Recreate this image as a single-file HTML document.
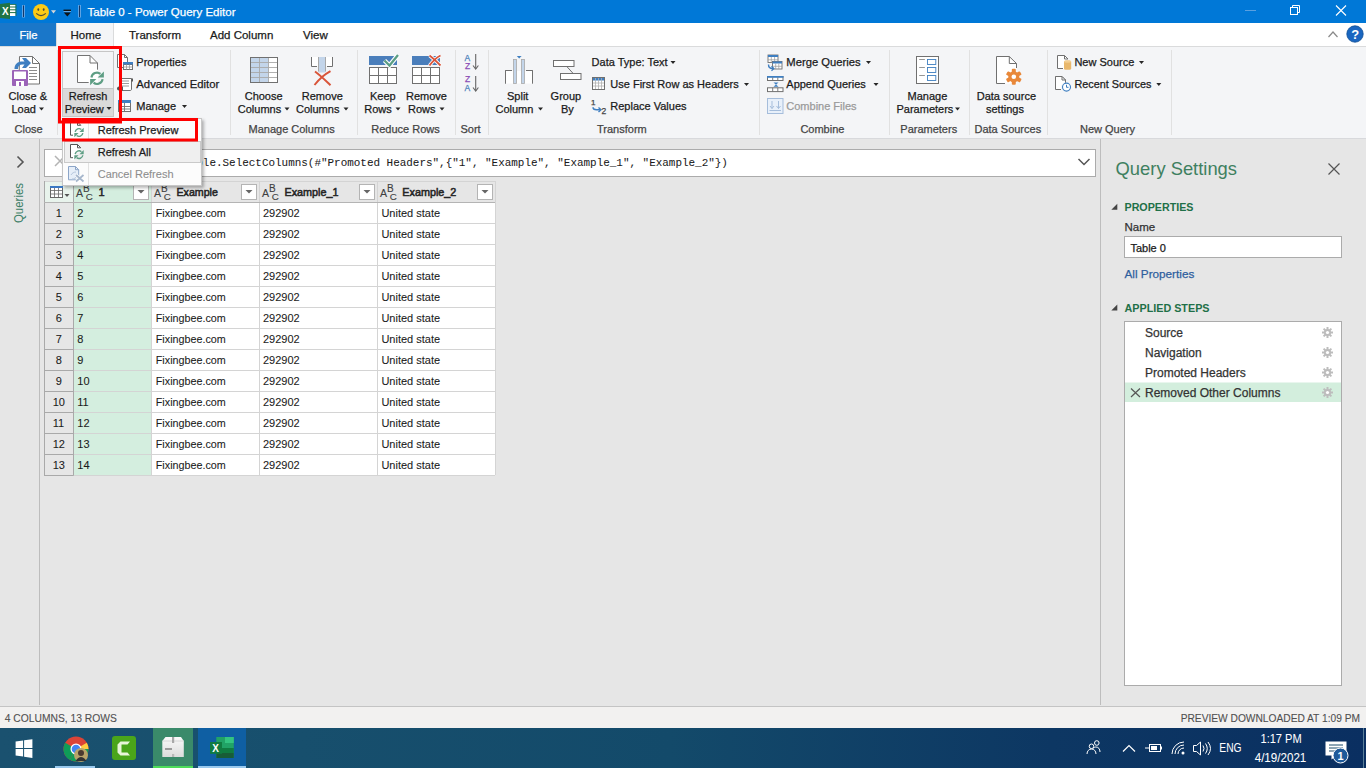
<!DOCTYPE html>
<html><head><meta charset="utf-8"><title>Power Query Editor</title>
<style>html,body{margin:0;padding:0;width:1366px;height:768px;overflow:hidden;background:#e6e6e6}
svg{display:block;font-family:"Liberation Sans",sans-serif}</style></head>
<body><svg width="1366" height="768" viewBox="0 0 1366 768">
<rect x="0" y="0" width="1366" height="23" fill="#0078d7" />
<rect x="9.5" y="4.5" width="6" height="11.5" fill="#fff" />
<line x1="9.5" y1="7" x2="16" y2="7" stroke="#1e7145" stroke-width="1" />
<line x1="9.5" y1="9.8" x2="16" y2="9.8" stroke="#1e7145" stroke-width="1" />
<line x1="9.5" y1="12.6" x2="16" y2="12.6" stroke="#1e7145" stroke-width="1" />
<line x1="9.5" y1="4.5" x2="16" y2="4.5" stroke="#1e7145" stroke-width="0.8" />
<line x1="16" y1="4.5" x2="16" y2="16" stroke="#1e7145" stroke-width="0.8" />
<path d="M0 4L10 2.8v16.2L0 18z" fill="#217346" />
<text x="2" y="14.5" font-size="10" fill="#fff" font-weight="bold" >X</text>
<rect x="22.0" y="5" width="3" height="12.5" fill="#5fa3e3" />
<rect x="23.0" y="5.5" width="1" height="11.5" fill="#12386a" />
<rect x="78.0" y="5" width="3" height="12.5" fill="#5fa3e3" />
<rect x="79.0" y="5.5" width="1" height="11.5" fill="#12386a" />
<circle cx="41" cy="12" r="8" fill="#fccb15"/>
<ellipse cx="38.3" cy="9.6" rx="0.9" ry="1.3" fill="#4e4b3a"/><ellipse cx="43.7" cy="9.6" rx="0.9" ry="1.3" fill="#4e4b3a"/>
<path d="M36.2 13.3q4.8 4.6 9.6 0" fill="none" stroke="#4e4b3a" stroke-width="1.1" />
<path d="M51 10.3h5l-2.5 3.2z" fill="#d8d8d8" />
<line x1="63.5" y1="10.3" x2="71" y2="10.3" stroke="#111" stroke-width="1.4" />
<line x1="63.5" y1="11.5" x2="71" y2="11.5" stroke="#9cc8f0" stroke-width="0.6" />
<path d="M63.8 12.5h7l-3.5 4z" fill="#111" />
<text x="87.5" y="16" font-size="11.5" fill="#fff" stroke="#fff" stroke-width="0.25" textLength="148" lengthAdjust="spacingAndGlyphs" >Table 0 - Power Query Editor</text>
<line x1="1245" y1="10.5" x2="1256" y2="10.5" stroke="#5aa0e0" stroke-width="1" />
<rect x="1290.5" y="7.5" width="7" height="7" fill="none" stroke="#fff" stroke-width="1" />
<path d="M1292.5 7.5v-2h7v7h-2" fill="none" stroke="#fff" stroke-width="1" />
<path d="M1336 5.5l10 10M1346 5.5l-10 10" fill="none" stroke="#fff" stroke-width="1.1" />
<rect x="0" y="23" width="1366" height="23" fill="#ffffff" />
<rect x="0" y="23" width="56" height="23" fill="#1a77c9" />
<text x="19.5" y="39.2" font-size="11.2" fill="#fff" stroke="#fff" stroke-width="0.25" >File</text>
<rect x="56" y="23" width="57.5" height="24" fill="#f4f5f7" />
<line x1="56.5" y1="23" x2="56.5" y2="46" stroke="#dadbdc" stroke-width="1" />
<line x1="113.5" y1="23" x2="113.5" y2="46" stroke="#dadbdc" stroke-width="1" />
<text x="70.5" y="39.2" font-size="11.5" fill="#1b1b1b" stroke="#1b1b1b" stroke-width="0.25" >Home</text>
<text x="129" y="39.2" font-size="11.5" fill="#1b1b1b" stroke="#1b1b1b" stroke-width="0.25" >Transform</text>
<text x="210" y="39.2" font-size="11.5" fill="#1b1b1b" stroke="#1b1b1b" stroke-width="0.25" >Add Column</text>
<text x="303" y="39.2" font-size="11.5" fill="#1b1b1b" stroke="#1b1b1b" stroke-width="0.25" >View</text>
<path d="M1328.5 37l4.5-5 4.5 5" fill="none" stroke="#8a8a8a" stroke-width="1.2" />
<circle cx="1355" cy="34" r="8.2" fill="#1a66c0" stroke="#0f4f96" stroke-width="0.8"/>
<text x="1351.2" y="38.8" font-size="13" fill="#fff" font-weight="bold" >?</text>
<rect x="0" y="46" width="1366" height="92" fill="#f4f5f7" />
<line x1="0" y1="46.5" x2="56" y2="46.5" stroke="#dadbdc" stroke-width="1" />
<line x1="113" y1="46.5" x2="1366" y2="46.5" stroke="#dadbdc" stroke-width="1" />
<line x1="0" y1="138.5" x2="1366" y2="138.5" stroke="#d8d9dc" stroke-width="1" />
<line x1="57.5" y1="50" x2="57.5" y2="135" stroke="#e1e1e1" stroke-width="1" />
<line x1="230.5" y1="50" x2="230.5" y2="135" stroke="#e1e1e1" stroke-width="1" />
<line x1="357.5" y1="50" x2="357.5" y2="135" stroke="#e1e1e1" stroke-width="1" />
<line x1="455.5" y1="50" x2="455.5" y2="135" stroke="#e1e1e1" stroke-width="1" />
<line x1="488.5" y1="50" x2="488.5" y2="135" stroke="#e1e1e1" stroke-width="1" />
<line x1="759.5" y1="50" x2="759.5" y2="135" stroke="#e1e1e1" stroke-width="1" />
<line x1="889.5" y1="50" x2="889.5" y2="135" stroke="#e1e1e1" stroke-width="1" />
<line x1="969.5" y1="50" x2="969.5" y2="135" stroke="#e1e1e1" stroke-width="1" />
<line x1="1047.5" y1="50" x2="1047.5" y2="135" stroke="#e1e1e1" stroke-width="1" />
<line x1="1171.5" y1="50" x2="1171.5" y2="135" stroke="#e1e1e1" stroke-width="1" />
<text x="14.5" y="133" font-size="11" fill="#444444" stroke="#444444" stroke-width="0.25" >Close</text>
<text x="248.5" y="133" font-size="11" fill="#444444" stroke="#444444" stroke-width="0.25" >Manage Columns</text>
<text x="371.3" y="133" font-size="11" fill="#444444" stroke="#444444" stroke-width="0.25" >Reduce Rows</text>
<text x="460.5" y="133" font-size="11" fill="#444444" stroke="#444444" stroke-width="0.25" >Sort</text>
<text x="597" y="133" font-size="11" fill="#444444" stroke="#444444" stroke-width="0.25" >Transform</text>
<text x="800.4" y="133" font-size="11" fill="#444444" stroke="#444444" stroke-width="0.25" >Combine</text>
<text x="900.3" y="133" font-size="11" fill="#444444" stroke="#444444" stroke-width="0.25" >Parameters</text>
<text x="974.5" y="133" font-size="11" fill="#444444" stroke="#444444" stroke-width="0.25" >Data Sources</text>
<text x="1080" y="133" font-size="11" fill="#444444" stroke="#444444" stroke-width="0.25" >New Query</text>
<path d="M19.5 56.5h13l7 7v20.5h-20.5z" fill="#fff" stroke="#737373" stroke-width="1" />
<path d="M32.5 56.5v7h7" fill="none" stroke="#737373" stroke-width="1" />
<line x1="29" y1="67.5" x2="37" y2="67.5" stroke="#8c8c8c" stroke-width="1" />
<line x1="29" y1="70.5" x2="37" y2="70.5" stroke="#8c8c8c" stroke-width="1" />
<line x1="29" y1="73.5" x2="37" y2="73.5" stroke="#8c8c8c" stroke-width="1" />
<line x1="29" y1="76.5" x2="37" y2="76.5" stroke="#8c8c8c" stroke-width="1" />
<line x1="29" y1="79.5" x2="37" y2="79.5" stroke="#8c8c8c" stroke-width="1" />
<path d="M14.5 69c0-5 3-7.5 8-7.5h2l-2.5-3.5h4l5 5-5 5h-4l2.5-3.5h-2c-3 0-4.5 1.5-4.5 4.5z" fill="#3f7fc1" />
<rect x="12" y="70" width="16" height="16" rx="1" fill="#9b63b8"/>
<rect x="14" y="71.5" width="12" height="7.5" fill="#fff" />
<rect x="16" y="81" width="8" height="5" fill="#fff" />
<rect x="19" y="82" width="2" height="4" fill="#9b63b8" />
<text x="8.5" y="100" font-size="11" fill="#1b1b1b" stroke="#1b1b1b" stroke-width="0.25" >Close &amp;</text>
<text x="11.5" y="112.5" font-size="11" fill="#1b1b1b" stroke="#1b1b1b" stroke-width="0.25" >Load</text>
<path d="M39 107.5h5l-2.5 3z" fill="#262626" />
<rect x="62.5" y="51.5" width="51" height="65" fill="#f4f5f7" stroke="#c6c6c6" stroke-width="1" />
<rect x="63" y="88" width="50" height="28" fill="#dadada" />
<line x1="63" y1="88.5" x2="113" y2="88.5" stroke="#c6c6c6" stroke-width="1" />
<path d="M77.5 55.5h12.5l8 8v19.5h-20.5z" fill="#fff" />
<path d="M88.7 82.5H77.5V55.5H90L97.5 63V69.7" fill="none" stroke="#737373" stroke-width="1" />
<path d="M90 55.5v7.5h7.5" fill="none" stroke="#737373" stroke-width="1" />
<text x="68.8" y="99.6" font-size="11" fill="#1b1b1b" stroke="#1b1b1b" stroke-width="0.25" >Refresh</text>
<text x="64.7" y="112.7" font-size="11" fill="#1b1b1b" stroke="#1b1b1b" stroke-width="0.25" >Preview</text>
<path d="M106.5 107h5l-2.5 3z" fill="#262626" />
<text x="136.3" y="66" font-size="11" fill="#1b1b1b" stroke="#1b1b1b" stroke-width="0.25" >Properties</text>
<text x="136.3" y="88" font-size="11" fill="#1b1b1b" stroke="#1b1b1b" stroke-width="0.25" textLength="83" lengthAdjust="spacingAndGlyphs" >Advanced Editor</text>
<text x="136.3" y="110" font-size="11" fill="#1b1b1b" stroke="#1b1b1b" stroke-width="0.25" >Manage</text>
<path d="M182 105h5l-2.5 3z" fill="#262626" />
<text x="244.7" y="100" font-size="11" fill="#1b1b1b" stroke="#1b1b1b" stroke-width="0.25" >Choose</text>
<text x="237.8" y="112.5" font-size="11" fill="#1b1b1b" stroke="#1b1b1b" stroke-width="0.25" >Columns</text>
<path d="M284.5 107.5h5l-2.5 3z" fill="#262626" />
<text x="301.8" y="100" font-size="11" fill="#1b1b1b" stroke="#1b1b1b" stroke-width="0.25" >Remove</text>
<text x="296" y="112.5" font-size="11" fill="#1b1b1b" stroke="#1b1b1b" stroke-width="0.25" >Columns</text>
<path d="M343.5 107.5h5l-2.5 3z" fill="#262626" />
<text x="370" y="100" font-size="11" fill="#1b1b1b" stroke="#1b1b1b" stroke-width="0.25" >Keep</text>
<text x="364.3" y="112.5" font-size="11" fill="#1b1b1b" stroke="#1b1b1b" stroke-width="0.25" >Rows</text>
<path d="M395.5 107.5h5l-2.5 3z" fill="#262626" />
<text x="406" y="100" font-size="11" fill="#1b1b1b" stroke="#1b1b1b" stroke-width="0.25" >Remove</text>
<text x="408" y="112.5" font-size="11" fill="#1b1b1b" stroke="#1b1b1b" stroke-width="0.25" >Rows</text>
<path d="M439.5 107.5h5l-2.5 3z" fill="#262626" />
<text x="507" y="100" font-size="11" fill="#1b1b1b" stroke="#1b1b1b" stroke-width="0.25" >Split</text>
<text x="495.5" y="112.5" font-size="11" fill="#1b1b1b" stroke="#1b1b1b" stroke-width="0.25" >Column</text>
<path d="M538 107.5h5l-2.5 3z" fill="#262626" />
<text x="550.6" y="100" font-size="11" fill="#1b1b1b" stroke="#1b1b1b" stroke-width="0.25" >Group</text>
<text x="560.9" y="112.5" font-size="11" fill="#1b1b1b" stroke="#1b1b1b" stroke-width="0.25" >By</text>
<text x="591.6" y="66" font-size="11" fill="#1b1b1b" stroke="#1b1b1b" stroke-width="0.25" >Data Type: Text</text>
<path d="M670.5 61h5l-2.5 3z" fill="#262626" />
<text x="610.3" y="88" font-size="11" fill="#1b1b1b" stroke="#1b1b1b" stroke-width="0.25" >Use First Row as Headers</text>
<path d="M744 83h5l-2.5 3z" fill="#262626" />
<text x="610.3" y="110" font-size="11" fill="#1b1b1b" stroke="#1b1b1b" stroke-width="0.25" >Replace Values</text>
<text x="786.3" y="66" font-size="11" fill="#1b1b1b" stroke="#1b1b1b" stroke-width="0.25" textLength="74.3" lengthAdjust="spacingAndGlyphs" >Merge Queries</text>
<path d="M866 61h5l-2.5 3z" fill="#262626" />
<text x="786.3" y="88" font-size="11" fill="#1b1b1b" stroke="#1b1b1b" stroke-width="0.25" >Append Queries</text>
<path d="M873.5 83h5l-2.5 3z" fill="#262626" />
<text x="786.3" y="110" font-size="11" fill="#9a9a9a" stroke="#9a9a9a" stroke-width="0.25" >Combine Files</text>
<text x="907.5" y="100" font-size="11" fill="#1b1b1b" stroke="#1b1b1b" stroke-width="0.25" >Manage</text>
<text x="896.5" y="112.5" font-size="11" fill="#1b1b1b" stroke="#1b1b1b" stroke-width="0.25" >Parameters</text>
<path d="M955 107.5h5l-2.5 3z" fill="#262626" />
<text x="976.7" y="100" font-size="11" fill="#1b1b1b" stroke="#1b1b1b" stroke-width="0.25" >Data source</text>
<text x="986" y="112.5" font-size="11" fill="#1b1b1b" stroke="#1b1b1b" stroke-width="0.25" >settings</text>
<text x="1074.4" y="66" font-size="11" fill="#1b1b1b" stroke="#1b1b1b" stroke-width="0.25" >New Source</text>
<path d="M1139 61h5l-2.5 3z" fill="#262626" />
<text x="1074.4" y="88" font-size="11" fill="#1b1b1b" stroke="#1b1b1b" stroke-width="0.25" textLength="77" lengthAdjust="spacingAndGlyphs" >Recent Sources</text>
<path d="M1156.3 83h5l-2.5 3z" fill="#262626" />
<rect x="0" y="139" width="1366" height="567" fill="#e6e6e6" />
<line x1="39.5" y1="139" x2="39.5" y2="705" stroke="#bdbdbd" stroke-width="1" />
<line x1="1100.5" y1="139" x2="1100.5" y2="705" stroke="#bdbdbd" stroke-width="1" />
<path d="M17.5 156.5l5.5 5.5-5.5 5.5" fill="none" stroke="#555" stroke-width="1.6" />
<text x="23.2" y="223" font-size="12.5" fill="#3d8066" textLength="40" lengthAdjust="spacingAndGlyphs" transform="rotate(-90 23.2 223)">Queries</text>
<rect x="44.5" y="149.5" width="1051" height="27" fill="#fff" stroke="#ababab" stroke-width="1" />
<text x="170" y="166" font-size="10.95" fill="#1b1b1b" stroke="#1b1b1b" stroke-width="0.05" font-family="Liberation Mono" >= Table.SelectColumns(#&quot;Promoted Headers&quot;,{&quot;1&quot;, &quot;Example&quot;, &quot;Example_1&quot;, &quot;Example_2&quot;})</text>
<path d="M1078.5 159l5.5 5.5 5.5-5.5" fill="none" stroke="#555" stroke-width="1.5" />
<path d="M55 156l10 10M65 156l-10 10" fill="none" stroke="#b4b4b4" stroke-width="1.5" />
<rect x="44" y="181" width="451" height="21" fill="#e6e6e6" />
<rect x="44" y="181" width="29" height="21" fill="#e8f3ec" />
<rect x="73" y="181" width="78" height="21" fill="#d4eedf" />
<rect x="44" y="202" width="29" height="273" fill="#e6e6e6" />
<rect x="73" y="202" width="78" height="273" fill="#d4eedf" />
<rect x="151" y="202" width="344" height="273" fill="#ffffff" />
<line x1="73" y1="202.5" x2="495" y2="202.5" stroke="#d4d4d4" stroke-width="1" />
<line x1="44" y1="202.5" x2="73.5" y2="202.5" stroke="#a9a9a9" stroke-width="1" />
<line x1="73" y1="223.5" x2="495" y2="223.5" stroke="#d4d4d4" stroke-width="1" />
<line x1="44" y1="223.5" x2="73.5" y2="223.5" stroke="#a9a9a9" stroke-width="1" />
<line x1="73" y1="244.5" x2="495" y2="244.5" stroke="#d4d4d4" stroke-width="1" />
<line x1="44" y1="244.5" x2="73.5" y2="244.5" stroke="#a9a9a9" stroke-width="1" />
<line x1="73" y1="265.5" x2="495" y2="265.5" stroke="#d4d4d4" stroke-width="1" />
<line x1="44" y1="265.5" x2="73.5" y2="265.5" stroke="#a9a9a9" stroke-width="1" />
<line x1="73" y1="286.5" x2="495" y2="286.5" stroke="#d4d4d4" stroke-width="1" />
<line x1="44" y1="286.5" x2="73.5" y2="286.5" stroke="#a9a9a9" stroke-width="1" />
<line x1="73" y1="307.5" x2="495" y2="307.5" stroke="#d4d4d4" stroke-width="1" />
<line x1="44" y1="307.5" x2="73.5" y2="307.5" stroke="#a9a9a9" stroke-width="1" />
<line x1="73" y1="328.5" x2="495" y2="328.5" stroke="#d4d4d4" stroke-width="1" />
<line x1="44" y1="328.5" x2="73.5" y2="328.5" stroke="#a9a9a9" stroke-width="1" />
<line x1="73" y1="349.5" x2="495" y2="349.5" stroke="#d4d4d4" stroke-width="1" />
<line x1="44" y1="349.5" x2="73.5" y2="349.5" stroke="#a9a9a9" stroke-width="1" />
<line x1="73" y1="370.5" x2="495" y2="370.5" stroke="#d4d4d4" stroke-width="1" />
<line x1="44" y1="370.5" x2="73.5" y2="370.5" stroke="#a9a9a9" stroke-width="1" />
<line x1="73" y1="391.5" x2="495" y2="391.5" stroke="#d4d4d4" stroke-width="1" />
<line x1="44" y1="391.5" x2="73.5" y2="391.5" stroke="#a9a9a9" stroke-width="1" />
<line x1="73" y1="412.5" x2="495" y2="412.5" stroke="#d4d4d4" stroke-width="1" />
<line x1="44" y1="412.5" x2="73.5" y2="412.5" stroke="#a9a9a9" stroke-width="1" />
<line x1="73" y1="433.5" x2="495" y2="433.5" stroke="#d4d4d4" stroke-width="1" />
<line x1="44" y1="433.5" x2="73.5" y2="433.5" stroke="#a9a9a9" stroke-width="1" />
<line x1="73" y1="454.5" x2="495" y2="454.5" stroke="#d4d4d4" stroke-width="1" />
<line x1="44" y1="454.5" x2="73.5" y2="454.5" stroke="#a9a9a9" stroke-width="1" />
<line x1="73" y1="475.5" x2="495" y2="475.5" stroke="#d4d4d4" stroke-width="1" />
<line x1="44" y1="475.5" x2="73.5" y2="475.5" stroke="#a9a9a9" stroke-width="1" />
<line x1="44" y1="181.5" x2="495" y2="181.5" stroke="#d4d4d4" stroke-width="1" />
<line x1="151.5" y1="181" x2="151.5" y2="475" stroke="#d4d4d4" stroke-width="1" />
<line x1="259.5" y1="181" x2="259.5" y2="475" stroke="#d4d4d4" stroke-width="1" />
<line x1="377.5" y1="181" x2="377.5" y2="475" stroke="#d4d4d4" stroke-width="1" />
<line x1="495.5" y1="181" x2="495.5" y2="475" stroke="#d4d4d4" stroke-width="1" />
<line x1="44.5" y1="181" x2="44.5" y2="475.5" stroke="#a9a9a9" stroke-width="1" />
<line x1="73.5" y1="181" x2="73.5" y2="475.5" stroke="#a9a9a9" stroke-width="1" />
<line x1="44" y1="202.5" x2="495" y2="202.5" stroke="#b4b4b4" stroke-width="1" />
<text x="55.75" y="216.9" font-size="11" fill="#1b1b1b" stroke="#1b1b1b" stroke-width="0.08" >1</text>
<text x="77.3" y="216.9" font-size="11" fill="#1b1b1b" stroke="#1b1b1b" stroke-width="0.08" >2</text>
<text x="155.8" y="216.9" font-size="11" fill="#1b1b1b" stroke="#1b1b1b" stroke-width="0.08" textLength="70" lengthAdjust="spacingAndGlyphs" >Fixingbee.com</text>
<text x="263" y="216.9" font-size="11" fill="#1b1b1b" stroke="#1b1b1b" stroke-width="0.08" >292902</text>
<text x="381.4" y="216.9" font-size="11" fill="#1b1b1b" stroke="#1b1b1b" stroke-width="0.08" >United state</text>
<text x="55.75" y="237.9" font-size="11" fill="#1b1b1b" stroke="#1b1b1b" stroke-width="0.08" >2</text>
<text x="77.3" y="237.9" font-size="11" fill="#1b1b1b" stroke="#1b1b1b" stroke-width="0.08" >3</text>
<text x="155.8" y="237.9" font-size="11" fill="#1b1b1b" stroke="#1b1b1b" stroke-width="0.08" textLength="70" lengthAdjust="spacingAndGlyphs" >Fixingbee.com</text>
<text x="263" y="237.9" font-size="11" fill="#1b1b1b" stroke="#1b1b1b" stroke-width="0.08" >292902</text>
<text x="381.4" y="237.9" font-size="11" fill="#1b1b1b" stroke="#1b1b1b" stroke-width="0.08" >United state</text>
<text x="55.75" y="258.9" font-size="11" fill="#1b1b1b" stroke="#1b1b1b" stroke-width="0.08" >3</text>
<text x="77.3" y="258.9" font-size="11" fill="#1b1b1b" stroke="#1b1b1b" stroke-width="0.08" >4</text>
<text x="155.8" y="258.9" font-size="11" fill="#1b1b1b" stroke="#1b1b1b" stroke-width="0.08" textLength="70" lengthAdjust="spacingAndGlyphs" >Fixingbee.com</text>
<text x="263" y="258.9" font-size="11" fill="#1b1b1b" stroke="#1b1b1b" stroke-width="0.08" >292902</text>
<text x="381.4" y="258.9" font-size="11" fill="#1b1b1b" stroke="#1b1b1b" stroke-width="0.08" >United state</text>
<text x="55.75" y="279.9" font-size="11" fill="#1b1b1b" stroke="#1b1b1b" stroke-width="0.08" >4</text>
<text x="77.3" y="279.9" font-size="11" fill="#1b1b1b" stroke="#1b1b1b" stroke-width="0.08" >5</text>
<text x="155.8" y="279.9" font-size="11" fill="#1b1b1b" stroke="#1b1b1b" stroke-width="0.08" textLength="70" lengthAdjust="spacingAndGlyphs" >Fixingbee.com</text>
<text x="263" y="279.9" font-size="11" fill="#1b1b1b" stroke="#1b1b1b" stroke-width="0.08" >292902</text>
<text x="381.4" y="279.9" font-size="11" fill="#1b1b1b" stroke="#1b1b1b" stroke-width="0.08" >United state</text>
<text x="55.75" y="300.9" font-size="11" fill="#1b1b1b" stroke="#1b1b1b" stroke-width="0.08" >5</text>
<text x="77.3" y="300.9" font-size="11" fill="#1b1b1b" stroke="#1b1b1b" stroke-width="0.08" >6</text>
<text x="155.8" y="300.9" font-size="11" fill="#1b1b1b" stroke="#1b1b1b" stroke-width="0.08" textLength="70" lengthAdjust="spacingAndGlyphs" >Fixingbee.com</text>
<text x="263" y="300.9" font-size="11" fill="#1b1b1b" stroke="#1b1b1b" stroke-width="0.08" >292902</text>
<text x="381.4" y="300.9" font-size="11" fill="#1b1b1b" stroke="#1b1b1b" stroke-width="0.08" >United state</text>
<text x="55.75" y="321.9" font-size="11" fill="#1b1b1b" stroke="#1b1b1b" stroke-width="0.08" >6</text>
<text x="77.3" y="321.9" font-size="11" fill="#1b1b1b" stroke="#1b1b1b" stroke-width="0.08" >7</text>
<text x="155.8" y="321.9" font-size="11" fill="#1b1b1b" stroke="#1b1b1b" stroke-width="0.08" textLength="70" lengthAdjust="spacingAndGlyphs" >Fixingbee.com</text>
<text x="263" y="321.9" font-size="11" fill="#1b1b1b" stroke="#1b1b1b" stroke-width="0.08" >292902</text>
<text x="381.4" y="321.9" font-size="11" fill="#1b1b1b" stroke="#1b1b1b" stroke-width="0.08" >United state</text>
<text x="55.75" y="342.9" font-size="11" fill="#1b1b1b" stroke="#1b1b1b" stroke-width="0.08" >7</text>
<text x="77.3" y="342.9" font-size="11" fill="#1b1b1b" stroke="#1b1b1b" stroke-width="0.08" >8</text>
<text x="155.8" y="342.9" font-size="11" fill="#1b1b1b" stroke="#1b1b1b" stroke-width="0.08" textLength="70" lengthAdjust="spacingAndGlyphs" >Fixingbee.com</text>
<text x="263" y="342.9" font-size="11" fill="#1b1b1b" stroke="#1b1b1b" stroke-width="0.08" >292902</text>
<text x="381.4" y="342.9" font-size="11" fill="#1b1b1b" stroke="#1b1b1b" stroke-width="0.08" >United state</text>
<text x="55.75" y="363.9" font-size="11" fill="#1b1b1b" stroke="#1b1b1b" stroke-width="0.08" >8</text>
<text x="77.3" y="363.9" font-size="11" fill="#1b1b1b" stroke="#1b1b1b" stroke-width="0.08" >9</text>
<text x="155.8" y="363.9" font-size="11" fill="#1b1b1b" stroke="#1b1b1b" stroke-width="0.08" textLength="70" lengthAdjust="spacingAndGlyphs" >Fixingbee.com</text>
<text x="263" y="363.9" font-size="11" fill="#1b1b1b" stroke="#1b1b1b" stroke-width="0.08" >292902</text>
<text x="381.4" y="363.9" font-size="11" fill="#1b1b1b" stroke="#1b1b1b" stroke-width="0.08" >United state</text>
<text x="55.75" y="384.9" font-size="11" fill="#1b1b1b" stroke="#1b1b1b" stroke-width="0.08" >9</text>
<text x="77.3" y="384.9" font-size="11" fill="#1b1b1b" stroke="#1b1b1b" stroke-width="0.08" >10</text>
<text x="155.8" y="384.9" font-size="11" fill="#1b1b1b" stroke="#1b1b1b" stroke-width="0.08" textLength="70" lengthAdjust="spacingAndGlyphs" >Fixingbee.com</text>
<text x="263" y="384.9" font-size="11" fill="#1b1b1b" stroke="#1b1b1b" stroke-width="0.08" >292902</text>
<text x="381.4" y="384.9" font-size="11" fill="#1b1b1b" stroke="#1b1b1b" stroke-width="0.08" >United state</text>
<text x="52.699999999999996" y="405.9" font-size="11" fill="#1b1b1b" stroke="#1b1b1b" stroke-width="0.08" >10</text>
<text x="77.3" y="405.9" font-size="11" fill="#1b1b1b" stroke="#1b1b1b" stroke-width="0.08" >11</text>
<text x="155.8" y="405.9" font-size="11" fill="#1b1b1b" stroke="#1b1b1b" stroke-width="0.08" textLength="70" lengthAdjust="spacingAndGlyphs" >Fixingbee.com</text>
<text x="263" y="405.9" font-size="11" fill="#1b1b1b" stroke="#1b1b1b" stroke-width="0.08" >292902</text>
<text x="381.4" y="405.9" font-size="11" fill="#1b1b1b" stroke="#1b1b1b" stroke-width="0.08" >United state</text>
<text x="52.699999999999996" y="426.9" font-size="11" fill="#1b1b1b" stroke="#1b1b1b" stroke-width="0.08" >11</text>
<text x="77.3" y="426.9" font-size="11" fill="#1b1b1b" stroke="#1b1b1b" stroke-width="0.08" >12</text>
<text x="155.8" y="426.9" font-size="11" fill="#1b1b1b" stroke="#1b1b1b" stroke-width="0.08" textLength="70" lengthAdjust="spacingAndGlyphs" >Fixingbee.com</text>
<text x="263" y="426.9" font-size="11" fill="#1b1b1b" stroke="#1b1b1b" stroke-width="0.08" >292902</text>
<text x="381.4" y="426.9" font-size="11" fill="#1b1b1b" stroke="#1b1b1b" stroke-width="0.08" >United state</text>
<text x="52.699999999999996" y="447.9" font-size="11" fill="#1b1b1b" stroke="#1b1b1b" stroke-width="0.08" >12</text>
<text x="77.3" y="447.9" font-size="11" fill="#1b1b1b" stroke="#1b1b1b" stroke-width="0.08" >13</text>
<text x="155.8" y="447.9" font-size="11" fill="#1b1b1b" stroke="#1b1b1b" stroke-width="0.08" textLength="70" lengthAdjust="spacingAndGlyphs" >Fixingbee.com</text>
<text x="263" y="447.9" font-size="11" fill="#1b1b1b" stroke="#1b1b1b" stroke-width="0.08" >292902</text>
<text x="381.4" y="447.9" font-size="11" fill="#1b1b1b" stroke="#1b1b1b" stroke-width="0.08" >United state</text>
<text x="52.699999999999996" y="468.9" font-size="11" fill="#1b1b1b" stroke="#1b1b1b" stroke-width="0.08" >13</text>
<text x="77.3" y="468.9" font-size="11" fill="#1b1b1b" stroke="#1b1b1b" stroke-width="0.08" >14</text>
<text x="155.8" y="468.9" font-size="11" fill="#1b1b1b" stroke="#1b1b1b" stroke-width="0.08" textLength="70" lengthAdjust="spacingAndGlyphs" >Fixingbee.com</text>
<text x="263" y="468.9" font-size="11" fill="#1b1b1b" stroke="#1b1b1b" stroke-width="0.08" >292902</text>
<text x="381.4" y="468.9" font-size="11" fill="#1b1b1b" stroke="#1b1b1b" stroke-width="0.08" >United state</text>
<text x="76" y="196.8" font-size="10.6" fill="#404040" stroke="#404040" stroke-width="0.1" >A</text>
<text x="83" y="191.7" font-size="10" fill="#404040" stroke="#404040" stroke-width="0.1" >B</text>
<text x="85.8" y="199.7" font-size="9.8" fill="#404040" stroke="#404040" stroke-width="0.1" >C</text>
<text x="98.4" y="196" font-size="11" fill="#262626" stroke="#262626" stroke-width="0.55" >1</text>
<rect x="133.5" y="184.5" width="15" height="15" fill="#fff" stroke="#b4b4b4" stroke-width="1" />
<path d="M137.5 190h7l-3.5 3.5z" fill="#666" />
<text x="154" y="196.8" font-size="10.6" fill="#404040" stroke="#404040" stroke-width="0.1" >A</text>
<text x="161" y="191.7" font-size="10" fill="#404040" stroke="#404040" stroke-width="0.1" >B</text>
<text x="163.8" y="199.7" font-size="9.8" fill="#404040" stroke="#404040" stroke-width="0.1" >C</text>
<text x="176.5" y="196" font-size="11" fill="#262626" stroke="#262626" stroke-width="0.55" textLength="41.4" lengthAdjust="spacingAndGlyphs" >Example</text>
<rect x="241.5" y="184.5" width="15" height="15" fill="#fff" stroke="#b4b4b4" stroke-width="1" />
<path d="M245.5 190h7l-3.5 3.5z" fill="#666" />
<text x="262" y="196.8" font-size="10.6" fill="#404040" stroke="#404040" stroke-width="0.1" >A</text>
<text x="269" y="191.7" font-size="10" fill="#404040" stroke="#404040" stroke-width="0.1" >B</text>
<text x="271.8" y="199.7" font-size="9.8" fill="#404040" stroke="#404040" stroke-width="0.1" >C</text>
<text x="284.5" y="196" font-size="11" fill="#262626" stroke="#262626" stroke-width="0.55" textLength="54" lengthAdjust="spacingAndGlyphs" >Example_1</text>
<rect x="359.5" y="184.5" width="15" height="15" fill="#fff" stroke="#b4b4b4" stroke-width="1" />
<path d="M363.5 190h7l-3.5 3.5z" fill="#666" />
<text x="380" y="196.8" font-size="10.6" fill="#404040" stroke="#404040" stroke-width="0.1" >A</text>
<text x="387" y="191.7" font-size="10" fill="#404040" stroke="#404040" stroke-width="0.1" >B</text>
<text x="389.8" y="199.7" font-size="9.8" fill="#404040" stroke="#404040" stroke-width="0.1" >C</text>
<text x="402.3" y="196" font-size="11" fill="#262626" stroke="#262626" stroke-width="0.55" textLength="54" lengthAdjust="spacingAndGlyphs" >Example_2</text>
<rect x="477.5" y="184.5" width="15" height="15" fill="#fff" stroke="#b4b4b4" stroke-width="1" />
<path d="M481.5 190h7l-3.5 3.5z" fill="#666" />
<rect x="50.5" y="186.5" width="12" height="11" fill="#fff" stroke="#666" stroke-width="1" />
<rect x="50" y="186" width="13" height="2" fill="#3b78c3" />
<line x1="50.5" y1="190.5" x2="62.5" y2="190.5" stroke="#666" stroke-width="0.8" />
<line x1="50.5" y1="194" x2="62.5" y2="194" stroke="#666" stroke-width="0.8" />
<line x1="54.5" y1="188" x2="54.5" y2="197.5" stroke="#666" stroke-width="0.8" />
<line x1="58.5" y1="188" x2="58.5" y2="197.5" stroke="#666" stroke-width="0.8" />
<path d="M64.5 194h5l-2.5 3z" fill="#555" />
<text x="1115.6" y="175" font-size="18.5" fill="#3e8060" textLength="121.4" lengthAdjust="spacingAndGlyphs" >Query Settings</text>
<path d="M1328.5 163.5l11 11M1339.5 163.5l-11 11" fill="none" stroke="#555" stroke-width="1.2" />
<path d="M1117.3 203.8v6h-6z" fill="#444" />
<text x="1124.5" y="210.6" font-size="11" fill="#1f7048" font-weight="bold" textLength="69" lengthAdjust="spacingAndGlyphs" >PROPERTIES</text>
<text x="1124.5" y="231" font-size="11.5" fill="#333" stroke="#333" stroke-width="0.25" >Name</text>
<rect x="1124.5" y="236.5" width="217" height="21" fill="#fff" stroke="#ababab" stroke-width="1" />
<text x="1130.4" y="251.7" font-size="11" fill="#1b1b1b" stroke="#1b1b1b" stroke-width="0.25" >Table 0</text>
<text x="1124.5" y="278" font-size="11.5" fill="#2f5f9e" stroke="#2f5f9e" stroke-width="0.25" textLength="69.8" lengthAdjust="spacingAndGlyphs" >All Properties</text>
<path d="M1117.3 304.4v6h-6z" fill="#444" />
<text x="1124.5" y="311.8" font-size="11" fill="#1f7048" font-weight="bold" textLength="85" lengthAdjust="spacingAndGlyphs" >APPLIED STEPS</text>
<rect x="1124.5" y="321.5" width="217" height="364" fill="#fff" stroke="#ababab" stroke-width="1" />
<rect x="1125" y="382.5" width="216" height="19.5" fill="#d3eedd" />
<text x="1145" y="337" font-size="12" fill="#333" stroke="#333" stroke-width="0.25" >Source</text>
<g transform="translate(1327.5 332.5)" fill="#bdbdbd"><circle r="3.6"/><rect x="-1" y="-5.5" width="2" height="11" transform="rotate(0)"/><rect x="-1" y="-5.5" width="2" height="11" transform="rotate(45)"/><rect x="-1" y="-5.5" width="2" height="11" transform="rotate(90)"/><rect x="-1" y="-5.5" width="2" height="11" transform="rotate(135)"/><circle r="1.6" fill="#fff"/></g>
<text x="1145" y="357" font-size="12" fill="#333" stroke="#333" stroke-width="0.25" >Navigation</text>
<g transform="translate(1327.5 352.5)" fill="#bdbdbd"><circle r="3.6"/><rect x="-1" y="-5.5" width="2" height="11" transform="rotate(0)"/><rect x="-1" y="-5.5" width="2" height="11" transform="rotate(45)"/><rect x="-1" y="-5.5" width="2" height="11" transform="rotate(90)"/><rect x="-1" y="-5.5" width="2" height="11" transform="rotate(135)"/><circle r="1.6" fill="#fff"/></g>
<text x="1145" y="377" font-size="12" fill="#333" stroke="#333" stroke-width="0.25" >Promoted Headers</text>
<g transform="translate(1327.5 372.5)" fill="#bdbdbd"><circle r="3.6"/><rect x="-1" y="-5.5" width="2" height="11" transform="rotate(0)"/><rect x="-1" y="-5.5" width="2" height="11" transform="rotate(45)"/><rect x="-1" y="-5.5" width="2" height="11" transform="rotate(90)"/><rect x="-1" y="-5.5" width="2" height="11" transform="rotate(135)"/><circle r="1.6" fill="#fff"/></g>
<text x="1145" y="397" font-size="12" fill="#333" stroke="#333" stroke-width="0.25" >Removed Other Columns</text>
<g transform="translate(1327.5 392.5)" fill="#bdbdbd"><circle r="3.6"/><rect x="-1" y="-5.5" width="2" height="11" transform="rotate(0)"/><rect x="-1" y="-5.5" width="2" height="11" transform="rotate(45)"/><rect x="-1" y="-5.5" width="2" height="11" transform="rotate(90)"/><rect x="-1" y="-5.5" width="2" height="11" transform="rotate(135)"/><circle r="1.6" fill="#fff"/></g>
<path d="M1131 388.5l9 8.5M1140 388.5l-9 8.5" fill="none" stroke="#555" stroke-width="1.2" />
<rect x="0" y="706" width="1366" height="22" fill="#f2f1f0" />
<line x1="0" y1="706.5" x2="1366" y2="706.5" stroke="#c4c4c4" stroke-width="1" />
<text x="4.8" y="722" font-size="10.5" fill="#505050" stroke="#505050" stroke-width="0.1" textLength="112" lengthAdjust="spacingAndGlyphs" >4 COLUMNS, 13 ROWS</text>
<text x="1180.7" y="722" font-size="10.5" fill="#505050" stroke="#505050" stroke-width="0.1" textLength="179.3" lengthAdjust="spacingAndGlyphs" >PREVIEW DOWNLOADED AT 1:09 PM</text>
<defs><linearGradient id="tb" x1="0" x2="1" y1="0" y2="0"><stop offset="0" stop-color="#1a516f"/><stop offset="0.22" stop-color="#174f6d"/><stop offset="0.49" stop-color="#134a6a"/><stop offset="0.77" stop-color="#0d3763"/><stop offset="1" stop-color="#0a2f61"/></linearGradient></defs>
<rect x="0" y="728" width="1366" height="40" fill="url(#tb)" />
<path d="M15.6 741.5l7.5-1v7.6h-7.5zM24.1 740.3l8.3-1.1v8.9h-8.3zM15.6 749h7.5v7.6l-7.5-1zM24.1 749h8.3v8.9l-8.3-1.1z" fill="#fff" />
<circle cx="76" cy="749" r="12.5" fill="#db4437"/>
<path d="M76 749L65.2 742.75A12.5 12.5 0 0 0 69.75 759.8z" fill="#0f9d58" />
<path d="M76 749L69.75 759.8A12.5 12.5 0 0 0 88.5 749z" fill="#0f9d58" />
<path d="M76 749L88.5 749A12.5 12.5 0 0 0 86.8 742.75z" fill="#ffcd40" />
<circle cx="76" cy="749" r="5.5" fill="#fff"/><circle cx="76" cy="749" r="4.3" fill="#4285f4"/>
<circle cx="81" cy="755" r="7" fill="#b8a46a"/><circle cx="81" cy="753" r="3" fill="#4a3a30"/>
<path d="M75.5 761q5.5-8 11 0" fill="#333" />
<rect x="55" y="766" width="40" height="2" fill="#99c9ee" />
<rect x="112" y="736" width="24" height="24" rx="3" fill="#4aa51a"/>
<path d="M130 741.5h-9.5l-3 3v8l3 3h9.5l-2.5-3h-6v-8h6z" fill="#e8f5d8" />
<rect x="153" y="728" width="40" height="40" fill="#3a8a6a" />
<rect x="153" y="766" width="40" height="2" fill="#4ddc5a" />
<defs><linearGradient id="bx" x1="0" x2="0" y1="0" y2="1"><stop offset="0" stop-color="#fafafa"/><stop offset="1" stop-color="#dcdcdc"/></linearGradient></defs>
<path d="M165.5 737h15.5l2.8 4v16h-21.5v-16z" fill="url(#bx)" />
<path d="M162.3 741h21.5" fill="none" stroke="#d0d0d0" stroke-width="0.8" />
<rect x="172" y="737" width="2.2" height="6" fill="#a8a8a8" />
<rect x="172" y="754" width="2.2" height="3" fill="#b8b8b8" />
<rect x="165" y="748" width="7" height="2" fill="#9a9a9a" />
<rect x="198" y="728" width="48" height="40" fill="#0f5fa3" />
<rect x="198" y="766" width="48" height="2" fill="#99c9ee" />
<rect x="216.3" y="737" width="17.5" height="21" fill="#21a366" />
<rect x="225" y="737" width="8.8" height="6" fill="#33c481" />
<rect x="216.3" y="748" width="17.5" height="5" fill="#107c41" />
<rect x="216.3" y="753" width="17.5" height="5" fill="#185c37" />
<rect x="210" y="742" width="12" height="11.8" fill="#107c41" />
<text x="212.3" y="751.8" font-size="10" fill="#fff" font-weight="bold" >X</text>
<path d="M1087 754c0-3 2-5 4.5-5s4.5 2 4.5 5M1089.2 746.3a2.3 2.3 0 1 0 4.6 0a2.3 2.3 0 1 0-4.6 0M1093 748.5c1-1 2-1.5 3-1.5 2.5 0 4 2 4 5M1094.5 743a2.3 2.3 0 1 0 4.6 0a2.3 2.3 0 1 0-4.6 0" fill="none" stroke="#fff" stroke-width="1" />
<path d="M1123 751.5l6-6 6 6" fill="none" stroke="#fff" stroke-width="1.2" />
<rect x="1149.5" y="744.5" width="11" height="7" fill="none" stroke="#fff" stroke-width="1" />
<rect x="1151" y="746" width="6" height="4" fill="#fff" />
<line x1="1145" y1="748" x2="1149.5" y2="748" stroke="#fff" stroke-width="1" />
<rect x="1160.5" y="746.5" width="1.5" height="3" fill="#fff" />
<path d="M1172 754a12 12 0 0 1 12-12M1175 754a9 9 0 0 1 9-9M1178 754a6 6 0 0 1 6-6" fill="none" stroke="#fff" stroke-width="1" />
<circle cx="1183" cy="753" r="1.5" fill="#fff"/>
<path d="M1193.5 745.5h3l4-3.5v13l-4-3.5h-3z" fill="none" stroke="#fff" stroke-width="1" />
<path d="M1203 745.5q2 3 0 6M1205.5 743.5q3.5 5 0 10M1208 742q5 6.5 0 13" fill="none" stroke="#fff" stroke-width="1" />
<text x="1219.3" y="752" font-size="12" fill="#fff" stroke="#fff" stroke-width="0.05" textLength="22.2" lengthAdjust="spacingAndGlyphs" >ENG</text>
<text x="1260.5" y="743" font-size="12" fill="#fff" stroke="#fff" stroke-width="0.05" textLength="41.2" lengthAdjust="spacingAndGlyphs" >1:17 PM</text>
<text x="1254.7" y="761.5" font-size="12" fill="#fff" stroke="#fff" stroke-width="0.05" textLength="51.6" lengthAdjust="spacingAndGlyphs" >4/19/2021</text>
<path d="M1325.5 741.5h21v14h-10l-5 4v-4h-6z" fill="#fff" />
<line x1="1329" y1="745" x2="1343" y2="745" stroke="#1a4a6a" stroke-width="1" />
<line x1="1329" y1="748" x2="1343" y2="748" stroke="#1a4a6a" stroke-width="1" />
<line x1="1329" y1="751" x2="1343" y2="751" stroke="#1a4a6a" stroke-width="1" />
<circle cx="1340.5" cy="755.5" r="7.5" fill="#1e5a9a" stroke="#fff" stroke-width="1"/>
<text x="1337.6" y="759.8" font-size="11" fill="#fff" font-weight="bold" >1</text>
<line x1="1363.5" y1="728" x2="1363.5" y2="768" stroke="#5a7f98" stroke-width="1" />
<path d="M91.4 77.5 A5.6 5.6 0 0 1 100.472 73.932" fill="none" stroke="#5e9e84" stroke-width="2.1" />
<path d="M102.6 79.1 A5.6 5.6 0 0 1 93.528 82.66799999999999" fill="none" stroke="#5e9e84" stroke-width="2.1" />
<path d="M103.9 71.39999999999999V77.5H97.64z" fill="#5e9e84" />
<path d="M90.1 85.2V79.1H96.36z" fill="#5e9e84" />
<path d="M117.5 54.5h7l3 3v10h-10z" fill="#fff" stroke="#707070" stroke-width="1" />
<path d="M124.5 54.5v3h3" fill="none" stroke="#707070" stroke-width="1" />
<rect x="123" y="62" width="10" height="8" fill="#fff" />
<rect x="123.5" y="64.5" width="9" height="5" fill="#fff" stroke="#707070" stroke-width="1" />
<rect x="123" y="62" width="10" height="2.5" fill="#3f7fc1" />
<line x1="126.5" y1="64.5" x2="126.5" y2="69.5" stroke="#9a9a9a" stroke-width="0.8" />
<line x1="129.5" y1="64.5" x2="129.5" y2="69.5" stroke="#9a9a9a" stroke-width="0.8" />
<line x1="123.5" y1="67" x2="132.5" y2="67" stroke="#9a9a9a" stroke-width="0.8" />
<path d="M120 78.5h11.5v10.5c0 1-0.5 1.5-1.5 1.5h-10.5z" fill="#fff" stroke="#707070" stroke-width="1" />
<path d="M131.5 78.5h1.5v3h-1.5z" fill="#555" />
<line x1="122" y1="81" x2="129" y2="81" stroke="#9a9a9a" stroke-width="1" />
<line x1="122" y1="83.5" x2="129" y2="83.5" stroke="#9a9a9a" stroke-width="1" />
<line x1="122" y1="86" x2="129" y2="86" stroke="#9a9a9a" stroke-width="1" />
<path d="M117 88.5c0-1 0.8-2 2-2h4v4h-4c-1.2 0-2-1-2-2z" fill="#555" />
<rect x="118.5" y="100.5" width="12" height="11" fill="#fff" stroke="#707070" stroke-width="1" />
<rect x="118" y="100" width="13" height="3" fill="#3f7fc1" />
<line x1="124.5" y1="103" x2="124.5" y2="111.5" stroke="#707070" stroke-width="0.9" />
<line x1="118.5" y1="106.5" x2="130.5" y2="106.5" stroke="#707070" stroke-width="0.9" />
<line x1="118.5" y1="109" x2="130.5" y2="109" stroke="#707070" stroke-width="0.9" />
<rect x="250.5" y="57.5" width="27" height="25" fill="#fff" stroke="#707070" stroke-width="1" />
<rect x="251" y="58" width="17.5" height="24" fill="#c3d5ea" />
<line x1="259.5" y1="58" x2="259.5" y2="82" stroke="#a8a8a8" stroke-width="0.9" />
<line x1="268.5" y1="58" x2="268.5" y2="82" stroke="#a8a8a8" stroke-width="0.9" />
<line x1="251" y1="62.5" x2="277" y2="62.5" stroke="#a8a8a8" stroke-width="0.9" />
<line x1="251" y1="67.5" x2="277" y2="67.5" stroke="#a8a8a8" stroke-width="0.9" />
<line x1="251" y1="72.5" x2="277" y2="72.5" stroke="#a8a8a8" stroke-width="0.9" />
<line x1="251" y1="77.5" x2="277" y2="77.5" stroke="#a8a8a8" stroke-width="0.9" />
<rect x="250.5" y="57.5" width="27" height="25" fill="none" stroke="#707070" stroke-width="1" />
<rect x="311.5" y="57" width="21" height="9.5" fill="#fff" />
<path d="M311.5 57v9.5h5.5M332.5 57v9.5h-5.5" fill="none" stroke="#707070" stroke-width="1" />
<rect x="318.5" y="57" width="7" height="15.5" fill="#c3d5ea" />
<path d="M318.5 57v14.5M325.5 57v14.5" fill="none" stroke="#a0a0a0" stroke-width="0.9" />
<path d="M314.5 85c4-5 9-10 16-13.8" fill="none" stroke="#d9553a" stroke-width="2" />
<path d="M315 71.5c5 3.5 10 8.5 15.5 13.8" fill="none" stroke="#d9553a" stroke-width="2" />
<rect x="369" y="56" width="28" height="9" fill="#4a7ebb" />
<rect x="369.5" y="67.5" width="27" height="16" fill="#fff" stroke="#707070" stroke-width="1" />
<line x1="378.5" y1="67.5" x2="378.5" y2="83.5" stroke="#707070" stroke-width="1" />
<line x1="387.5" y1="67.5" x2="387.5" y2="83.5" stroke="#707070" stroke-width="1" />
<line x1="369.5" y1="75.5" x2="396.5" y2="75.5" stroke="#707070" stroke-width="1" />
<path d="M384.5 60.5l5 5 8.5-10.5" fill="none" stroke="#fff" stroke-width="4.5" />
<path d="M384.5 60.5l5 5 8.5-10.5" fill="none" stroke="#5b9e84" stroke-width="2.3" />
<rect x="412" y="56" width="28" height="9" fill="#4a7ebb" />
<rect x="412.5" y="67.5" width="27" height="16" fill="#fff" stroke="#707070" stroke-width="1" />
<line x1="421.5" y1="67.5" x2="421.5" y2="83.5" stroke="#707070" stroke-width="1" />
<line x1="430.5" y1="67.5" x2="430.5" y2="83.5" stroke="#707070" stroke-width="1" />
<line x1="412.5" y1="75.5" x2="439.5" y2="75.5" stroke="#707070" stroke-width="1" />
<path d="M429.5 55.5c4 3 7.5 6.5 11 10M429.5 65.5c3-4 7-8 11-10" fill="none" stroke="#fff" stroke-width="3.5" />
<path d="M429.5 55.5c4 3 7.5 6.5 11 10M429.5 65.5c3-4 7-8 11-10" fill="none" stroke="#d9553a" stroke-width="1.8" />
<text x="464.6" y="60.6" font-size="8.5" fill="#4a7ebb" stroke="#4a7ebb" stroke-width="0.25" >A</text>
<text x="465" y="68.9" font-size="8.5" fill="#8a4db5" stroke="#8a4db5" stroke-width="0.25" >Z</text>
<text x="465" y="82.2" font-size="8.5" fill="#8a4db5" stroke="#8a4db5" stroke-width="0.25" >Z</text>
<text x="464.6" y="91" font-size="8.5" fill="#4a7ebb" stroke="#4a7ebb" stroke-width="0.25" >A</text>
<line x1="475.7" y1="54" x2="475.7" y2="69" stroke="#666" stroke-width="1.1" />
<path d="M473 65.5l2.7 3.5 2.7-3.5" fill="none" stroke="#666" stroke-width="1.1" />
<line x1="475.7" y1="76" x2="475.7" y2="91" stroke="#666" stroke-width="1.1" />
<path d="M473 87.5l2.7 3.5 2.7-3.5" fill="none" stroke="#666" stroke-width="1.1" />
<path d="M505.5 83.5V70.5H512M526 70.5h6.5V83.5" fill="#fff" stroke="#707070" stroke-width="1" />
<rect x="506" y="71" width="26.5" height="12.5" fill="#fff" />
<path d="M505.5 83.5V70.5H512M526 70.5h6.5V83.5" fill="none" stroke="#707070" stroke-width="1" />
<rect x="513.5" y="59.5" width="3" height="24" fill="#c3d5ea" stroke="#a8a8a8" stroke-width="0.8" />
<rect x="521.5" y="59.5" width="3" height="24" fill="#c3d5ea" stroke="#a8a8a8" stroke-width="0.8" />
<path d="M516.8 56h4.8l-2.4 2.6z" fill="#3f7fc1" />
<rect x="553.5" y="60.5" width="20.5" height="6" fill="#fff" stroke="#707070" stroke-width="1" />
<rect x="560.5" y="73.5" width="20.5" height="6" fill="#fff" stroke="#707070" stroke-width="1" />
<line x1="566.8" y1="66.5" x2="573.2" y2="73.5" stroke="#707070" stroke-width="1" />
<rect x="592.5" y="77.5" width="12" height="12" fill="#fff" stroke="#707070" stroke-width="1" />
<rect x="593" y="78" width="11" height="2.5" fill="#3f7fc1" />
<line x1="595.5" y1="78" x2="595.5" y2="89" stroke="#b0b0b0" stroke-width="0.8" />
<line x1="598.5" y1="78" x2="598.5" y2="89" stroke="#b0b0b0" stroke-width="0.8" />
<line x1="601.5" y1="78" x2="601.5" y2="89" stroke="#b0b0b0" stroke-width="0.8" />
<line x1="593" y1="83" x2="604" y2="83" stroke="#b0b0b0" stroke-width="0.8" />
<line x1="593" y1="86" x2="604" y2="86" stroke="#b0b0b0" stroke-width="0.8" />
<rect x="592.5" y="77.5" width="12" height="12" fill="none" stroke="#707070" stroke-width="1" />
<text x="591" y="104.6" font-size="8" fill="#444" stroke="#444" stroke-width="0.25" >1</text>
<path d="M593 107.3c0 2 1.5 2.5 3.5 2.5h3.5" fill="none" stroke="#3f7fc1" stroke-width="1.4" />
<path d="M598.5 107.5l2.5 2.3-2.5 2.3" fill="none" stroke="#3f7fc1" stroke-width="1.4" />
<text x="601.5" y="113.5" font-size="8.5" fill="#444" stroke="#444" stroke-width="0.25" >2</text>
<rect x="768" y="55" width="10" height="7.5" fill="#fff" stroke="#707070" stroke-width="0.9" />
<rect x="768" y="55" width="10" height="2" fill="#3f7fc1" />
<line x1="771.3" y1="57" x2="771.3" y2="62.5" stroke="#999" stroke-width="0.7" />
<line x1="774.6" y1="57" x2="774.6" y2="62.5" stroke="#999" stroke-width="0.7" />
<line x1="768" y1="59.8" x2="778" y2="59.8" stroke="#999" stroke-width="0.7" />
<rect x="772.5" y="61.5" width="9.5" height="7.5" fill="#fff" stroke="#707070" stroke-width="0.9" />
<rect x="772.5" y="61.5" width="9.5" height="2" fill="#3f7fc1" />
<line x1="775.7" y1="63.5" x2="775.7" y2="69" stroke="#999" stroke-width="0.7" />
<line x1="778.8" y1="63.5" x2="778.8" y2="69" stroke="#999" stroke-width="0.7" />
<line x1="772.5" y1="66.3" x2="782" y2="66.3" stroke="#999" stroke-width="0.7" />
<path d="M768.5 64.5c0 3 1.5 4 4 4" fill="none" stroke="#3f7fc1" stroke-width="1.4" />
<path d="M771.5 66.3l2.3 2.2-2.3 2.2" fill="none" stroke="#3f7fc1" stroke-width="1.3" />
<rect x="767.5" y="76.5" width="15.5" height="4" fill="#fff" stroke="#707070" stroke-width="1" />
<rect x="767" y="76" width="16.5" height="1.8" fill="#3f7fc1" />
<line x1="772.7" y1="77.5" x2="772.7" y2="80.5" stroke="#707070" stroke-width="0.9" />
<line x1="777.8" y1="77.5" x2="777.8" y2="80.5" stroke="#707070" stroke-width="0.9" />
<path d="M773.5 82.5h5l-2.5 2.3z" fill="#3f7fc1" />
<path d="M773.5 86.8l2.5-2.3 2.5 2.3z" fill="#3f7fc1" />
<rect x="767.5" y="87.8" width="15.5" height="3.8" fill="#fff" stroke="#707070" stroke-width="1" />
<line x1="772.7" y1="87.8" x2="772.7" y2="91.6" stroke="#707070" stroke-width="0.9" />
<line x1="777.8" y1="87.8" x2="777.8" y2="91.6" stroke="#707070" stroke-width="0.9" />
<rect x="767.5" y="98.5" width="15.5" height="15" fill="#e8f0fa" stroke="#a5bddb" stroke-width="1" />
<line x1="772" y1="101" x2="772" y2="108.5" stroke="#a5bddb" stroke-width="1" />
<path d="M770 106l2 2.5 2-2.5" fill="none" stroke="#a5bddb" stroke-width="1" />
<line x1="778.5" y1="101" x2="778.5" y2="108.5" stroke="#a5bddb" stroke-width="1" />
<path d="M776.5 106l2 2.5 2-2.5" fill="none" stroke="#a5bddb" stroke-width="1" />
<line x1="769.5" y1="110.5" x2="781" y2="110.5" stroke="#a5bddb" stroke-width="1" />
<rect x="916.5" y="56.5" width="22" height="27" fill="#fff" stroke="#707070" stroke-width="1" />
<line x1="919.2" y1="59.5" x2="924.9" y2="59.5" stroke="#8a8a8a" stroke-width="0.9" />
<line x1="919.2" y1="67.5" x2="924.9" y2="67.5" stroke="#8a8a8a" stroke-width="0.9" />
<line x1="919.2" y1="75.5" x2="924.9" y2="75.5" stroke="#8a8a8a" stroke-width="0.9" />
<rect x="927.5" y="59.5" width="8.3" height="5" fill="none" stroke="#3f7fc1" stroke-width="0.9" />
<rect x="927.5" y="67.5" width="8.3" height="5" fill="none" stroke="#3f7fc1" stroke-width="0.9" />
<rect x="927.5" y="75.5" width="8.3" height="5" fill="none" stroke="#3f7fc1" stroke-width="0.9" />
<path d="M996.5 56.5h13l7 7v20h-20z" fill="#fff" />
<path d="M1005 83.5H996.5V56.5H1009.3L1016.5 63.5V68" fill="none" stroke="#707070" stroke-width="1" />
<path d="M1009.3 56.5v7h7.2" fill="none" stroke="#707070" stroke-width="1" />
<g transform="translate(1013.8 76.8)" fill="#e8883a"><rect x="-2" y="-8" width="4" height="16" rx="1" transform="rotate(0)"/><rect x="-2" y="-8" width="4" height="16" rx="1" transform="rotate(60)"/><rect x="-2" y="-8" width="4" height="16" rx="1" transform="rotate(120)"/><circle r="5.5"/><circle r="2.3" fill="#fff"/></g>
<path d="M1057.5 55.5h7l3.5 3.5v10h-10.5z" fill="#fff" />
<path d="M1063 68.5H1057.5V55.5H1064.5L1068 59" fill="none" stroke="#707070" stroke-width="1" />
<path d="M1064.5 55.5v3.5h3.5" fill="none" stroke="#707070" stroke-width="1" />
<rect x="1064" y="60.5" width="7.2" height="9.3" rx="1.6" fill="#e9b86c"/>
<ellipse cx="1067.6" cy="61.6" rx="3.6" ry="1.2" fill="#f3cf92"/>
<path d="M1055.5 76.5h6.5l3.5 3.5v3" fill="none" stroke="#707070" stroke-width="1" />
<path d="M1055.5 76.5h6.5l3.5 3.5v3.3h-0.5a4 4 0 0 0-4 4v2.5h-5.5z" fill="#fff" />
<path d="M1061 89.5H1055.5V76.5H1062L1065.5 80V82.6" fill="none" stroke="#707070" stroke-width="1" />
<path d="M1062 76.5v3.5h3.5" fill="none" stroke="#707070" stroke-width="1" />
<circle cx="1066.5" cy="87.1" r="4" fill="#fff" stroke="#3f7fc1" stroke-width="1.1"/>
<path d="M1066.5 84.8v2.5h2" fill="none" stroke="#3f7fc1" stroke-width="1" />
<filter id="sh" x="-20%" y="-20%" width="140%" height="150%"><feGaussianBlur stdDeviation="1.5"/></filter>
<rect x="64" y="120" width="140" height="68" fill="rgba(0,0,0,0.28)" filter="url(#sh)"/>
<rect x="62.5" y="118.5" width="139" height="67" fill="#fcfcfc" stroke="#c6c6c6" stroke-width="1" />
<line x1="88.5" y1="119" x2="88.5" y2="185" stroke="#e2e2e2" stroke-width="1" />
<rect x="64.5" y="141.5" width="136" height="21" fill="#efefef" stroke="#c9c9c9" stroke-width="1" />
<text x="97.7" y="134" font-size="11" fill="#1b1b1b" stroke="#1b1b1b" stroke-width="0.25" >Refresh Preview</text>
<path d="M70.5 144.5h7l3.3 3.3v4.5h-1a5 5 0 0 0-5 5v3h-4.3z" fill="#fff" />
<path d="M73 157.7H70.5V144.5H77.5L80.8 147.8" fill="none" stroke="#555" stroke-width="1" />
<path d="M77.5 144.5v3.3h3.3" fill="none" stroke="#555" stroke-width="1" />
<path d="M75.19200000000001 154.15599999999998 A3.808 3.808 0 0 1 81.36096 151.72976" fill="none" stroke="#5e9e84" stroke-width="1.4280000000000002" />
<path d="M82.80799999999999 155.244 A3.808 3.808 0 0 1 76.63904 157.67023999999998" fill="none" stroke="#5e9e84" stroke-width="1.4280000000000002" />
<path d="M83.69200000000001 150.00799999999998V154.15599999999998H79.4352z" fill="#5e9e84" />
<path d="M74.30799999999999 159.392V155.244H78.5648z" fill="#5e9e84" />
<path d="M70.5 122h7l3.3 3.3v4.5h-1a5 5 0 0 0-5 5v3h-4.3z" fill="#fff" />
<path d="M73 135.2H70.5V122H77.5L80.8 125.3" fill="none" stroke="#555" stroke-width="1" />
<path d="M77.5 122v3.3h3.3" fill="none" stroke="#555" stroke-width="1" />
<path d="M75.19200000000001 131.956 A3.808 3.808 0 0 1 81.36096 129.52976" fill="none" stroke="#5e9e84" stroke-width="1.4280000000000002" />
<path d="M82.80799999999999 133.044 A3.808 3.808 0 0 1 76.63904 135.47024" fill="none" stroke="#5e9e84" stroke-width="1.4280000000000002" />
<path d="M83.69200000000001 127.80799999999999V131.956H79.4352z" fill="#5e9e84" />
<path d="M74.30799999999999 137.192V133.044H78.5648z" fill="#5e9e84" />
<path d="M68.5 166.5h7l3.2 3.2v10.1h-10.2z" fill="#e6eef8" stroke="#8ca5c8" stroke-width="1" />
<path d="M75.5 166.5v3.2h3.2" fill="none" stroke="#8ca5c8" stroke-width="1" />
<path d="M71 175c1-2 3-3 5-3M77 176c-1 2-3 3-5 3" fill="none" stroke="#b5c6dc" stroke-width="1" />
<path d="M76 175l7.5 6.5M83.5 175l-7.5 6.5" fill="none" stroke="#fff" stroke-width="3" />
<path d="M76 175l7.5 6.5M83.5 175l-7.5 6.5" fill="none" stroke="#a7b7cc" stroke-width="1.8" />
<text x="97.7" y="155.5" font-size="11" fill="#1b1b1b" stroke="#1b1b1b" stroke-width="0.25" >Refresh All</text>
<text x="97.7" y="177.5" font-size="11" fill="#8e8e8e" stroke="#8e8e8e" stroke-width="0.1" >Cancel Refresh</text>
<rect x="59.5" y="47.5" width="61" height="74.5" fill="none" stroke="#ff0000" stroke-width="3" />
<rect x="63.5" y="119.5" width="133" height="20.5" fill="none" stroke="#ff0000" stroke-width="3" />
</svg></body></html>
